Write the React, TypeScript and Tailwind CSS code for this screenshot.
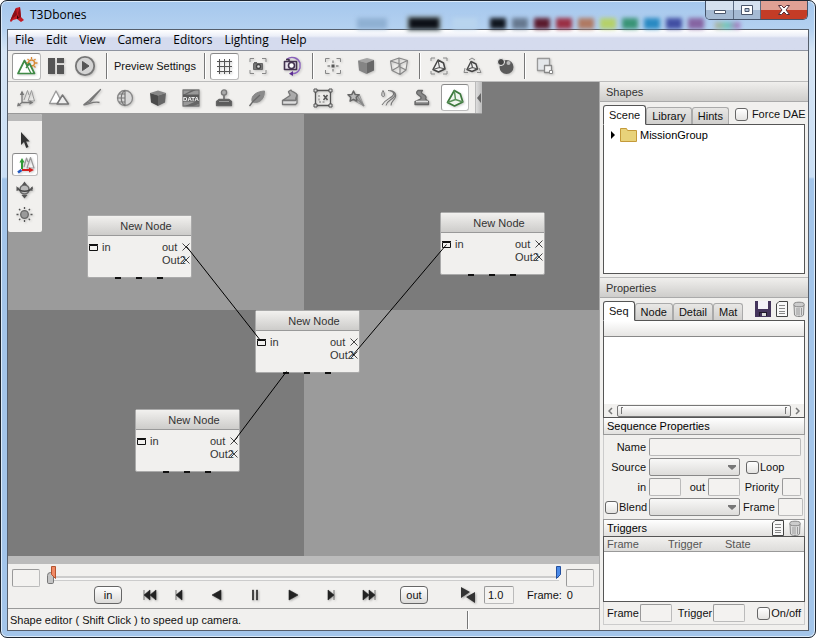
import React from 'react';

interface IconProps {
  children: React.ReactNode;
  className?: string;
}

const Icon: React.FC<IconProps> = ({ children, className = 'w-[22px] h-[22px]' }) => (
  <svg viewBox="0 0 22 22" className={`${className} shrink-0 drop-shadow-[1px_1px_1px_rgba(0,0,0,0.2)]`} fill="none" stroke="#666" strokeWidth="1.3" strokeLinejoin="round">
    {children}
  </svg>
);

const MountainSun = () => (
  <Icon>
    <g stroke="#d98a35">
      <circle cx="15.500" cy="8" r="3" />
      <path d="M15.500 2v2M15.500 12v3M10 8h2M19 8h2.500M11.500 4l1.200 1.200M19.500 4l-1.200 1.200M18 11l1.500 1.500" />
    </g>
    <path d="M2 18.500 8.500 5.500 11 10.500l2.500-2 5 10z" fill="#fff" stroke="#3f8a46" strokeWidth="1.700" />
    <path d="M11 10.500l4 8M10 13l3-4" stroke="#3f8a46" strokeWidth="1.300" />
  </Icon>
);

const Panels = () => (
  <Icon>
    <path d="M3 3h7v16H3zM12 3h7v5h-7zM12 10h7v9h-7z" fill="#555" stroke="none" />
  </Icon>
);

const PlayCircle = () => (
  <Icon>
    <circle cx="11" cy="11" r="9.200" fill="#d4d4d4" stroke="#777" strokeWidth="1.800" />
    <path d="M8.500 6.500v9l6.500-4.500z" fill="#555" stroke="#555" strokeWidth="1" />
  </Icon>
);

const GridIcon = () => (
  <Icon>
    <path d="M6.500 4v15M11.500 4v15M16.500 4v15M4 6.500h15M4 11.500h15M4 16.500h15" stroke="#555" strokeWidth="1" />
  </Icon>
);

const CameraFrame = () => (
  <Icon>
    <path d="M3 7V3.500h4M15 3.500h4V7M19 15v3.500h-4M7 18.500H3V15" stroke="#888" strokeWidth="1" />
    <path d="M6.500 8.500h9v6h-9zM7 7.500h3" fill="#777" stroke="#666" strokeWidth="1" />
    <circle cx="11.500" cy="11.500" r="2" fill="#ddd" stroke="#444" />
  </Icon>
);

const CameraOrbit = () => (
  <Icon>
    <path d="M6 4A8.500 8.500 0 0 1 19 8v5a8 8 0 0 1-8 5.500" stroke="#8a62bb" strokeWidth="1.400" />
    <path d="M12 16l-4 2.700 4 2.300z" fill="#5c2d91" stroke="none" />
    <path d="M3.500 6.500h12v8h-12zM5 4.500h3v2" fill="#e8e2ee" stroke="#43334f" strokeWidth="1.600" />
    <circle cx="10.500" cy="10.500" r="3" fill="#fff" stroke="#43334f" strokeWidth="1.600" />
  </Icon>
);

const TargetFrame = () => (
  <Icon>
    <path d="M3.500 7V3.500h4M14.500 3.500h4V7M18.500 15v3.500h-4M7.500 18.500h-4V15" stroke="#888" strokeWidth="1" />
    <path d="M11 5.500v2.500M11 14v2.500M5.500 11h2.500M14 11h2.500" stroke="#888" />
    <path d="M9.500 9.500h3v3h-3z" fill="#555" stroke="none" />
  </Icon>
);

const SolidCube = () => (
  <Icon>
    <path d="M3 5.500 12 3l7 2-7.500 3z" fill="#a5a5a5" stroke="none" />
    <path d="M3 5.500 11.500 8v11L4 15.500z" fill="#858585" stroke="none" />
    <path d="M11.500 8 19 5v10.500L11.500 19z" fill="#686868" stroke="none" />
  </Icon>
);

const WireCube = () => (
  <Icon>
    <path d="M2.500 6 11 3l8.500 2.500-7.500 3.500zM2.500 6 4 15.500l8 4 6-4.500 1.500-9.500M12 9v10.500M11 3v8.500L4 15.500M11 11.500l7 3.500" stroke="#888" strokeWidth="1.200" />
  </Icon>
);

const BoundsCube = () => (
  <Icon>
    <path d="M3 6V3h4M15 3h4v3M19 16v3h-4M7 19H3v-3" stroke="#888" strokeWidth="1" />
    <path d="M10 5 5 14.500l5.500 2.500 6.500-3-1.500-6z" fill="#eee" stroke="#444" strokeWidth="1.500" />
    <path d="M10 5l1.500 7.500L5 14.500M11.500 12.500 17 14" stroke="#555" strokeWidth="1.200" />
  </Icon>
);

const ObjectCube = () => (
  <Icon>
    <path d="M8 5l3-2 3 2M4 13l-1 4.500h4M18 13l2 4.500h-4" stroke="#888" strokeWidth="1" />
    <path d="M10 6.500 6 14.500l5 2 5.500-2.500-1.500-5z" fill="#eee" stroke="#444" strokeWidth="1.400" />
    <path d="M10 6.500l1.500 6L6 14.500M11.500 12.500l5 1.500" stroke="#555" strokeWidth="1.200" />
  </Icon>
);

const Spheres = () => (
  <Icon>
    <circle cx="12.500" cy="12" r="7" fill="#5b5b5b" stroke="none" />
    <circle cx="7" cy="7" r="3.500" fill="#444" stroke="#efefef" strokeWidth="1" />
    <circle cx="14.500" cy="8" r="2" fill="#bbb" stroke="none" />
  </Icon>
);

const Squares = () => (
  <Icon>
    <path d="M3.500 3.500h12v12h-12z" fill="#e4e7ea" stroke="#999" />
    <path d="M10.500 10.500h7v7h-7z" fill="#f4f4f4" stroke="#888" />
    <path d="M15.500 15.500h3v3h-3z" fill="#fff" stroke="#888" strokeWidth="1" />
  </Icon>
);

const AxisCones = () => (
  <Icon>
    <path d="M9 13 12.500 3.500 14 8M13 14l3.500-10.500L19.500 14z" stroke="#999" strokeWidth="1" />
    <path d="M7 16V5M7 15.500h9M7 15.500l-4 3" stroke="#777" />
    <path d="M4.800 8 7 3.500 9.200 8zM14.500 13.200l4 2.300-4 2.300zM2 19.500l1-4 3 3z" fill="#777" stroke="none" />
  </Icon>
);

const AxisConesColor = () => (
  <Icon>
    <path d="M10 13 12.500 4 14 8M13 14l3.500-10.500L20 14z" stroke="#999" strokeWidth="1.200" />
    <path d="M8 15V6" stroke="#2e9a34" strokeWidth="2" />
    <path d="M5.500 8.500 8 4l2.500 4.500z" fill="#2e9a34" stroke="none" />
    <path d="M8 16h8" stroke="#d3201f" strokeWidth="2" />
    <path d="M15 13.500l5 2.500-5 2.500z" fill="#d3201f" stroke="none" />
    <path d="M7.500 16 4 18.500" stroke="#2058c0" strokeWidth="2.600" />
  </Icon>
);

const Mountains = () => (
  <Icon>
    <path d="M1.500 16.500 8 4 14.500 16.500z" fill="#fff" stroke="#999" />
    <path d="M9 17 14.500 8l6 9z" fill="#eee" stroke="#777" strokeWidth="1.500" />
  </Icon>
);

const Brush = () => (
  <Icon>
    <path d="M19.500 2.500 8 13.500 3 17.500l6-2.500z" fill="#aaa" stroke="#777" strokeWidth="1.200" />
    <path d="M2.500 18c5-.5 10-4 16-2.500" stroke="#777" />
  </Icon>
);

const Globe = () => (
  <Icon>
    <circle cx="11" cy="11" r="7.500" fill="#d8d8d8" stroke="#888" />
    <path d="M11 3.500v15M3.500 11h8M5 7h6M5 15h6M11 3.500c-5 3-5 12 0 15" stroke="#777" strokeWidth="1.200" />
  </Icon>
);

const DarkCube = () => (
  <Icon>
    <path d="M3 6 11 3.500 19 6l-8 2.500z" fill="#888" stroke="none" />
    <path d="M3 6l8 2.500V19l-7-3.500z" fill="#4b4b4b" stroke="none" />
    <path d="M19 6l-8 2.500V19l7-3.500z" fill="#666" stroke="none" />
  </Icon>
);

const DataIcon = () => (
  <Icon>
    <path d="M3 3h16v16H3z" fill="#999" stroke="#777" />
    <path d="M3 8 12 3h4L5 8zM5 19 19 13v4l-6 2z" fill="#666" stroke="none" />
    <path d="M3 7.500h16v7H3z" fill="#5a5a5a" stroke="none" />
    <text x="11" y="13.500" textAnchor="middle" fontSize="6" fontWeight="bold" fill="#fff" stroke="none" fontFamily="Liberation Sans, Arial, sans-serif">DATA</text>
  </Icon>
);

const Joystick = () => (
  <Icon>
    <circle cx="11" cy="5.500" r="2.600" fill="#aaa" stroke="#777" />
    <path d="M11 8v5" stroke="#777" strokeWidth="1.800" />
    <path d="M6 12.500h10l2.500 2v4h-15v-4z" fill="#5c5c5c" stroke="#666" />
    <path d="M6 14.500h10" stroke="#999" strokeWidth="1" />
  </Icon>
);

const Leaf = () => (
  <Icon>
    <path d="M6 14C5 8 11 4.500 18.500 4c0 7-4 13-12 11z" fill="#8b8b8b" stroke="#888" strokeWidth="1" />
    <path d="M3.500 19 7 14.500 14 8" stroke="#6a6a6a" />
  </Icon>
);

const RoadShape = () => (
  <Icon>
    <path d="M3.500 13.500 11 8.500c.500-2-2-2.500-1.500-4L12 3c0 2 6 2.500 6 5l-1.500 5.500z" fill="#aaa" stroke="#777" />
    <path d="M3.500 13.500h13L18 8v8l-1.500 1.500h-13z" fill="#ddd" stroke="#777" />
  </Icon>
);

const ZoneSelect = () => (
  <Icon>
    <path d="M3.500 3.500h15v15h-15z" stroke="#555" />
    <path d="M2 2h3v3H2zM17 2h3v3h-3zM2 17h3v3H2zM17 17h3v3h-3z" fill="#ddd" stroke="#555" strokeWidth="1" />
    <path d="M11.500 8l4 5M15.500 8l-4 5" stroke="#555" strokeWidth="1.500" />
    <path d="M7 8v7h7" strokeDasharray="2 1.500" stroke="#777" strokeWidth="1" />
  </Icon>
);

const ShootingStar = () => (
  <Icon>
    <path d="M8 13 19 19 14 7z" fill="#bbb" stroke="#999" strokeWidth="1" />
    <path d="M10 10l9 9M12 8.500l7 10.500" stroke="#888" />
    <path d="M8.500 4l1.600 3.400 3.900.4-2.800 2.600.7 3.700-3.400-1.800-3.400 1.800.7-3.700L3 7.800l3.900-.4z" fill="#bbb" stroke="#666" strokeWidth="1.500" />
  </Icon>
);

const River = () => (
  <Icon>
    <path d="M5 3.500C3.500 6 3 9 5 9.500S7 7 5 3.500z" fill="#ccc" stroke="#777" strokeWidth="1" />
    <path d="M10 3.500c6 .5 7 3.500 4 6S8 12 4 18M12 3.500c6 1 6 5 3 7.500s-6 3-7 7.500M14 4c5 2 4 6 2.500 8s-3.500 3-3.500 6.500" stroke="#777" strokeWidth="1.100" />
  </Icon>
);

const RoadPath = () => (
  <Icon>
    <path d="M7 3.500h4.500c-2 2-1 3 1 4s3.500 3 2 4.500l3 2.500v3H4v-3L9.500 12C11 10.500 9.500 9.500 8 8.500 5 7 5 5 7 3.500z" fill="#888" stroke="#666" />
    <path d="M5 14.500h12" stroke="#ddd" strokeWidth="1.500" />
  </Icon>
);

const ShapeCube = () => (
  <Icon>
    <path d="M10.300 3.500 3.500 15.500l7 3.500 8.300-4L16.300 7z" fill="#f1f6ef" stroke="#3c783c" strokeWidth="1.700" />
    <path d="M10.300 3.500 11.500 12.500 3.500 15.500M11.500 12.500l7.300 2.500" stroke="#5a925a" strokeWidth="1.500" />
  </Icon>
);

const PointerArrow = () => (
  <Icon>
    <path d="M7 3v13l3-3 2.200 6 2.300-1-2.300-5.500h3.500z" fill="#333" stroke="none" />
  </Icon>
);

const RotateGizmo = () => (
  <Icon>
    <circle cx="10.500" cy="10.500" r="4.500" fill="#bbb" stroke="#666" strokeWidth="1.500" />
    <path d="M3.500 8.500c2 5 12 5 15 0" stroke="#444" strokeWidth="1.500" />
    <path d="M8 6l2.500-3.500L13 6zM7.500 16l3 3.500 3-3.500zM2.500 7l3 4-3 1zM18.500 7l-3 4 3 1z" fill="#555" stroke="none" />
  </Icon>
);

const SunIcon = () => (
  <Icon>
    <circle cx="10.500" cy="10.500" r="3.800" fill="#9a9a9a" stroke="#666" />
    <path d="M10.500 3v2M10.500 16v2M2.500 10.500h2M16.500 10.500h2M5 5l1.300 1.300M14.700 14.700 16 16M16 5l-1.300 1.300M6.300 14.700 5 16" stroke="#555" />
  </Icon>
);

const SaveIcon = () => (
  <svg viewBox="0 0 16 16" className="w-4 h-4">
    <path d="M0 0h16v16H0z" fill="#45355c" />
    <path d="M3 0h10v8H3z" fill="#f4f2f7" />
    <path d="M4 11h8v4H4z" fill="#201828" />
    <path d="M5 12h6v3H5z" fill="#ddd" />
    <path d="M5 12h2v3H5z" fill="#45355c" />
  </svg>
);

const PageIcon = () => (
  <svg viewBox="0 0 12 16" className="w-3 h-4" fill="none">
    <path d="M3 .500h8.500v15H.500V3z" fill="#f8f8f8" stroke="#444" />
    <path d="M3 4.500h6M3 7.500h6M3 10.500h6M3 12.500h6" stroke="#888" />
  </svg>
);

const TrashIcon = () => (
  <svg viewBox="0 0 12 16" className="w-3 h-4" fill="none">
    <path d="M1 4l.5 10c1 2 8 2 9 0L11 4z" fill="#ddd" stroke="#888" />
    <ellipse cx="6" cy="3.500" rx="5.300" ry="2.300" fill="#ccc" stroke="#888" />
    <path d="M4 7v7M6 7v7.500M8.500 7v7" stroke="#999" />
  </svg>
);

interface ToolProps {
  label: string;
  icon: React.ReactNode;
  active?: boolean;
  size?: string;
}

const Tool: React.FC<ToolProps> = ({ label, icon, active, size = 'w-[29px] h-[27px]' }) => (
  <button
    type="button"
    aria-label={label}
    aria-pressed={active}
    className={`${size} shrink-0 flex items-center justify-center rounded-[3px] border ${active ? 'bg-white border-[#bbb] border-t-[#888] border-l-[#999]' : 'border-transparent'}`}
  >
    {icon}
  </button>
);

const Separator = ({ className = 'mx-1', height = 'h-[26px]' }: { className?: string; height?: string }) => (
  <div className={`w-[2px] shrink-0 border-l border-[#777] bg-white ${height} ${className}`} />
);

const swatches = ['bg-[#10161f]', 'bg-[#66788f]', 'bg-[#5b1a2e]', 'bg-[#9b3045]', 'bg-[#b07a63]', 'bg-[#b5d16a]', 'bg-[#3a9476]', 'bg-[#2a8ac2]', 'bg-[#424fa3]', 'bg-[#8664a2]'];

const TitleBar = () => (
  <header className="relative h-7 flex items-start justify-between pl-2 pr-[7px]">
    {/* blurred desktop showing through the glass */}
    <div className="absolute left-[350px] right-[72px] bottom-0 h-[11px] flex items-stretch blur-[2px]">
      <div className="w-[30px] ml-[6px] bg-[#8fb0d3]" />
      <div className="w-[30px] ml-[22px] bg-[#0c1017] ring-2 ring-[#8fa0a5]" />
      <div className="w-[24px] ml-[14px] bg-[#b8d4ee]" />
      <div className="flex ml-[13px] gap-[6px]">
        {swatches.map((color) => <div key={color} className={`w-4 ${color}`} />)}
      </div>
      <div className="w-[25px] h-[7px] self-end ml-[11px] bg-linear-to-r from-[#b0ad98] via-[#69c9bd] to-[#a76bbd]" />
    </div>
    <div className="relative flex items-center gap-[5px] pt-[5px]">
      <svg viewBox="0 0 16 18" className="w-4 h-[18px]">
        <path d="M1 15 4 8l3-6 4-1 1 10 3 3-3 2-4-3-4 1-2 2z" fill="#c31b25" />
        <path d="M7 2l1 7-4 3-3 3 3-7zM9 7l2-6 1 10-2 1z" fill="#8a1018" />
        <path d="M8 9l2 3-2 1z" fill="#3a0608" />
      </svg>
      <h1 className="text-[12px] leading-[18px] font-['Open_Sans','Segoe_UI',sans-serif] text-black">T3Dbones</h1>
    </div>
    <div className="relative flex h-[19px] rounded-b-[5px] border border-t-0 border-[#445268] overflow-hidden">
      <button type="button" aria-label="Minimize" className="w-7 flex items-center justify-center border-r border-[#5b6b82] bg-linear-to-b from-[#d5e1ef] from-50% to-[#a5bad3] to-50%">
        <svg viewBox="0 0 14 12" className="w-[14px] h-3"><path d="M1.500 6.500h11v3h-11z" fill="#fff" stroke="#4a566b" /></svg>
      </button>
      <button type="button" aria-label="Maximize" className="w-[27px] flex items-center justify-center border-r border-[#5b6b82] bg-linear-to-b from-[#d5e1ef] from-50% to-[#a5bad3] to-50%">
        <svg viewBox="0 0 14 12" className="w-[14px] h-3"><path d="M1.500 1.500h11v9h-11z" fill="#fff" stroke="#4a566b" /><path d="M5 4.500h4v3H5z" fill="#b4c4d9" stroke="#4a566b" /></svg>
      </button>
      <button type="button" aria-label="Close" className="w-[46px] flex items-center justify-center bg-linear-to-b from-[#e0a094] from-50% to-[#c43c26] to-50%">
        <svg viewBox="0 0 14 12" className="w-[14px] h-3"><path d="M1.500 1.500h3L7 4l2.500-2.500h3L9 6l3.500 4.500h-3L7 8l-2.500 2.500h-3L5 6z" fill="#fff" stroke="#54303a" /></svg>
      </button>
    </div>
  </header>
);

const menus = ['File', 'Edit', 'View', 'Camera', 'Editors', 'Lighting', 'Help'];

const MenuBar = () => (
  <nav className="h-[21px] px-[7px] flex items-center gap-3 border-b border-[#8e939f] bg-linear-to-b from-white from-0% via-[#eceff8] via-30% to-[#d5dbee] to-40% font-['Open_Sans','Segoe_UI',sans-serif] text-[12px] leading-4 text-black">
    {menus.map((menu) => <button key={menu} type="button">{menu}</button>)}
  </nav>
);

const MainToolbar = () => (
  <div className="h-[31px] shrink-0 flex items-center pl-1 border-b border-[#bbb] bg-[#f1f0ee]">
    <Tool label="World editor" icon={<MountainSun />} active />
    <Tool label="GUI editor" icon={<Panels />} />
    <Tool label="Play" icon={<PlayCircle />} />
    <Separator className="ml-[7px] mr-[6px]" />
    <button type="button" className="whitespace-nowrap">Preview Settings</button>
    <Separator className="ml-2 mr-1" />
    <div className="flex gap-[5px]">
      <Tool label="Grid" icon={<GridIcon />} active />
      <Tool label="Fit camera" icon={<CameraFrame />} />
      <Tool label="Orbit camera" icon={<CameraOrbit />} />
    </div>
    <Separator className="ml-[5px] mr-[5px]" />
    <div className="flex gap-1">
      <Tool label="Center" icon={<TargetFrame />} />
      <Tool label="Solid" icon={<SolidCube />} />
      <Tool label="Wireframe" icon={<WireCube />} />
    </div>
    <Separator className="ml-[5px] mr-1" />
    <div className="flex gap-1">
      <Tool label="Bounds" icon={<BoundsCube />} />
      <Tool label="Object transform" icon={<ObjectCube />} />
      <Tool label="Materials" icon={<Spheres />} />
    </div>
    <Separator className="ml-1 mr-[5px]" />
    <Tool label="Background" icon={<Squares />} />
  </div>
);

const editors = [
  { label: 'Object editor', icon: <AxisCones /> },
  { label: 'Terrain editor', icon: <Mountains /> },
  { label: 'Terrain painter', icon: <Brush /> },
  { label: 'Material editor', icon: <Globe /> },
  { label: 'Sketch tool', icon: <DarkCube /> },
  { label: 'Datablock editor', icon: <DataIcon /> },
  { label: 'Decal editor', icon: <Joystick /> },
  { label: 'Forest editor', icon: <Leaf /> },
  { label: 'Mesh road editor', icon: <RoadShape /> },
  { label: 'Mission area editor', icon: <ZoneSelect /> },
  { label: 'Particle editor', icon: <ShootingStar /> },
  { label: 'River editor', icon: <River /> },
  { label: 'Road editor', icon: <RoadPath /> },
  { label: 'Shape editor', icon: <ShapeCube />, active: true },
];

const EditorToolbar = () => (
  <div className="w-fit h-8 flex items-center pl-1 border-b border-[#999] bg-[#f1f0ee]">
    <div className="flex gap-[5px]">
      {editors.map((editor) => <Tool key={editor.label} {...editor} size="w-[28px] h-[27px]" />)}
    </div>
    <button type="button" aria-label="Collapse toolbar" className="w-[7px] self-stretch ml-[6px] flex items-center justify-center border-l border-[#bbb] bg-linear-to-r from-[#ddd] to-[#bbb]">
      <svg viewBox="0 0 4 10" className="w-1 h-[10px]"><path d="M4 0v10L0 5z" fill="#666" /></svg>
    </button>
  </div>
);

const Palette = () => (
  <div className="w-[34px] rounded-[2px] overflow-hidden bg-[#f1f0ee]">
    <div className="h-[7px] bg-[#b9b9b9]" />
    <div className="flex flex-col items-center gap-[2px] pt-[7px] pb-[6px]">
      <Tool label="Select" icon={<PointerArrow />} size="w-[26px] h-[23px]" />
      <Tool label="Move" icon={<AxisConesColor />} size="w-[26px] h-[23px]" active />
      <Tool label="Rotate" icon={<RotateGizmo />} size="w-[26px] h-[23px]" />
      <Tool label="Light" icon={<SunIcon />} size="w-[26px] h-[23px]" />
    </div>
  </div>
);

const nodes = [
  { id: 'a', x: 79, y: 133 },
  { id: 'b', x: 432, y: 130 },
  { id: 'c', x: 247, y: 228 },
  { id: 'd', x: 127, y: 327 },
];

const links = ['M178.500 164.500 252.500 258.500', 'M344.500 273.500 438.500 162.500', 'M226.500 358.500 278.500 289.500'];

const Cross = () => (
  <svg viewBox="0 0 8 8" className="w-2 h-2 mb-[2px] shrink-0"><path d="M.500.500l7 7M7.500.500l-7 7" stroke="#444" /></svg>
);

const GraphNode = () => (
  <div className="w-[105px] h-[63px] rounded-[2px] border border-[#aaa] bg-[#f1f0ee] text-[#333]">
    <div className="h-5 pl-[13px] flex items-center justify-center border-b border-[#999] bg-linear-to-b from-[#f2f1ef] to-[#cdccca]">New Node</div>
    <div className="flex justify-between pt-1 pl-px pr-[1px] leading-[13px]">
      <div className="flex h-[15px] items-center gap-1">
        <svg viewBox="0 0 9 7" className="w-[9px] h-[7px] mb-px"><path d="M.500 1.500h8v5h-8zM0 .500h9" fill="none" stroke="#111" /></svg>
        in
      </div>
      <div className="w-[28px] pt-px">
        <div className="flex items-center justify-between">out<Cross /></div>
        <div className="flex items-center">Out2<span className="-ml-1"><Cross /></span></div>
      </div>
    </div>
    <div className="flex pt-[10px] pl-[27px] gap-[15px]">
      <i className="w-[6px] h-[2px] bg-[#111]" />
      <i className="w-[6px] h-[2px] bg-[#111]" />
      <i className="w-[6px] h-[2px] bg-[#111]" />
    </div>
  </div>
);

const Viewport = () => (
  <div className="relative flex-1 min-h-0 overflow-hidden">
    <div className="absolute inset-0 grid grid-cols-2 grid-rows-[12fr_13fr]">
      <div className="bg-[#9b9b9b]" />
      <div className="bg-[#7b7b7b]" />
      <div className="bg-[#7b7b7b]" />
      <div className="bg-[#9b9b9b]" />
    </div>
    <div className="relative">
      <EditorToolbar />
      <Palette />
    </div>
    {nodes.map((node) => (
      <div key={node.id} className="absolute" style={{ left: node.x, top: node.y }}>
        <GraphNode />
      </div>
    ))}
    <svg className="absolute inset-0 w-full h-full pointer-events-none">
      {links.map((d) => <path key={d} d={d} stroke="#000" fill="none" />)}
    </svg>
  </div>
);

const field = 'min-w-0 rounded-[2px] border border-[#bbb] border-t-[#999] border-l-[#999] bg-[#f3f2f0] px-[3px]';

const transport = [
  { label: 'Previous frame', d: 'M4 1v10M10 1v10L4 6z' },
  { label: 'Play backwards', d: 'M11 1v10L2 6z' },
  { label: 'Pause', d: 'M4.500 1v10h1V1zM8.500 1v10h1V1z' },
  { label: 'Play forwards', d: 'M3 1v10l9-5z' },
  { label: 'Next frame', d: 'M10 1v10M4 1v10l6-5z' },
  { label: 'Last frame', d: 'M13 1v10M1 1v10l6-5zM7 1v10l6-5z' },
];

const TransportButton = ({ label, d }: { label: string; d: string }) => (
  <button type="button" aria-label={label}>
    <svg viewBox="0 0 14 12" className="w-[14px] h-3 drop-shadow-[1px_1px_1px_rgba(0,0,0,0.3)]"><path d={d} fill="#222" stroke="#222" strokeWidth=".6" /></svg>
  </button>
);

const pill = 'w-[28px] h-[18px] rounded-[4px] border border-[#666] bg-linear-to-b from-white to-[#dcdbd9] text-center';

const Timeline = () => (
  <section className="shrink-0 bg-[#f1f0ee]">
    <div className="h-2 bg-[#bbb]" />
    <div className="flex items-start gap-[7px] pt-[5px] pl-1 pr-[5px]">
      <input aria-label="Start frame" className={`${field} w-[28px] h-[18px]`} />
      <div className="relative flex-1 h-4">
        <input
          type="range"
          aria-label="Timeline"
          defaultValue={0}
          className="block w-full h-[19px] appearance-none bg-transparent [&::-webkit-slider-runnable-track]:h-[5px] [&::-webkit-slider-runnable-track]:bg-[#f6f6f6] [&::-webkit-slider-runnable-track]:border-t-2 [&::-webkit-slider-runnable-track]:border-b [&::-webkit-slider-runnable-track]:border-[#ccc] [&::-webkit-slider-thumb]:appearance-none [&::-webkit-slider-thumb]:w-[7px] [&::-webkit-slider-thumb]:h-3 [&::-webkit-slider-thumb]:-mt-[6px] [&::-webkit-slider-thumb]:rounded-t-[4px] [&::-webkit-slider-thumb]:rounded-b-[2px] [&::-webkit-slider-thumb]:border [&::-webkit-slider-thumb]:border-[#777] [&::-webkit-slider-thumb]:bg-[#c5c5c5]"
        />
        <svg viewBox="0 0 5 13" className="absolute left-1 -top-[3px] w-[5px] h-[13px]"><path d="M.500.500h4v12l-4-4z" fill="#f08a66" stroke="#b5532f" /></svg>
        <svg viewBox="0 0 5 13" className="absolute -right-[2px] -top-[3px] w-[5px] h-[13px]"><path d="M.500.500h4v8l-4 4z" fill="#4a8ae8" stroke="#234f9e" /></svg>
      </div>
      <input aria-label="End frame" className={`${field} w-[28px] h-[18px]`} />
    </div>
    <div className="flex items-center h-[21px] pl-[86px] pb-[5px]">
      <button type="button" className={pill}>in</button>
      <div className="flex ml-[21px] mr-[15px]">
        <TransportButton label="First frame" d="M1 1v10M7 1v10L1 6zM13 1v10L7 6z" />
      </div>
      <div className="flex gap-6 mr-6">
        {transport.map((item) => <TransportButton key={item.label} {...item} />)}
      </div>
      <button type="button" className={pill}>out</button>
      <svg viewBox="0 0 16 16" className="w-4 h-4 ml-8 drop-shadow-[1px_1px_1px_rgba(0,0,0,0.3)]"><path d="M1 0v11l9-6zM15 5v11L6 10z" fill="#333" /></svg>
      <input aria-label="Speed" defaultValue="1.0" className={`${field} w-[30px] h-[18px] ml-2`} />
      <span className="ml-[13px]">Frame:</span>
      <output className="ml-[5px]">0</output>
    </div>
  </section>
);

const StatusBar = () => (
  <footer className="h-[22px] shrink-0 flex items-center pl-[2px] border-t border-[#999] bg-[#f1f0ee]">
    <span className="w-[453px]">Shape editor ( Shift Click ) to speed up camera.</span>
    <Separator height="h-[18px]" />
  </footer>
);

const PanelTitle = ({ children }: { children: React.ReactNode }) => (
  <h2 className="h-5 shrink-0 pl-[6px] flex items-center border-b border-[#aaa] bg-linear-to-b from-[#f0efed] to-[#cecdcb] text-[#333]">{children}</h2>
);

const Tab = ({ children, active }: { children: React.ReactNode; active?: boolean }) => (
  <button
    type="button"
    role="tab"
    aria-selected={!!active}
    className={`rounded-t-[3px] border ${active ? 'px-[5px] h-5 -mb-px pb-px bg-white border-[#555] border-b-white relative' : 'px-[5px] h-[17px] bg-linear-to-b from-[#e8e7e5] to-[#d0cfcd] border-[#aaa] border-b-0'}`}
  >
    {children}
  </button>
);

const Check = ({ label, gap = 'gap-px' }: { label: string; gap?: string }) => (
  <label className={`flex items-center whitespace-nowrap ${gap}`}>
    <input type="checkbox" className="appearance-none w-[13px] h-[13px] shrink-0 rounded-[3px] border border-[#666] bg-linear-to-b from-white to-[#e4e3e1]" />
    {label}
  </label>
);

const Drop = ({ id, label }: { id: string; label?: string }) => (
  <div className="relative w-[91px] shrink-0">
    <select id={id} aria-label={label} className="block appearance-none w-full h-[18px] rounded-[2px] border border-[#888] bg-linear-to-b from-[#f8f8f7] to-[#dddcda]" />
    <svg viewBox="0 0 8 5" className="absolute right-1 top-[7px] w-2 h-[5px] pointer-events-none"><path d="M0 0h8v1.500L4 5 0 1.500z" fill="#777" /></svg>
  </div>
);

const formLabel = 'shrink-0 text-right';
const strip = 'flex items-center px-[3px] bg-linear-to-b from-white to-[#e2e1df]';

const Sidebar = () => (
  <aside className="w-[209px] shrink-0 flex flex-col border-l border-[#aaa] bg-[#f1f0ee] text-[#111]">
    <PanelTitle>Shapes</PanelTitle>
    <div className="px-[3px] pt-[2px]">
      <div role="tablist" className="flex items-end h-5">
        <Tab active>Scene</Tab>
        <Tab>Library</Tab>
        <Tab>Hints</Tab>
        <div className="self-start ml-[6px] pt-[3px]"><Check label="Force DAE" gap="gap-1" /></div>
      </div>
      <div className="h-[150px] border border-[#555] bg-white pt-[3px] pl-[7px]">
        <div className="flex items-center text-black">
          <svg viewBox="0 0 4 8" className="w-1 h-2"><path d="M0 0v8l4-4z" fill="#000" /></svg>
          <svg viewBox="0 0 17 14" className="w-[17px] h-[14px] ml-[5px] mr-[3px]"><path d="M.500.500h6l1 2h9v11H.500z" fill="#e8d27a" stroke="#c49a3a" /></svg>
          MissionGroup
        </div>
      </div>
    </div>
    <div className="h-1 border-b border-[#bbb]" />
    <PanelTitle>Properties</PanelTitle>
    <div className="flex-1 min-h-0 flex flex-col px-[3px] pt-[2px]">
      <div role="tablist" className="flex items-end h-5">
        <Tab active>Seq</Tab>
        <Tab>Node</Tab>
        <Tab>Detail</Tab>
        <Tab>Mat</Tab>
        <div className="flex items-center gap-[5px] ml-auto pb-[3px]">
          <button type="button" aria-label="Save"><SaveIcon /></button>
          <button type="button" aria-label="New sequence"><PageIcon /></button>
          <button type="button" aria-label="Delete sequence"><TrashIcon /></button>
        </div>
      </div>
      <div className="border border-[#555] bg-white">
        <div className="h-4 border-b border-[#888] bg-linear-to-b from-white to-[#e6e5e3]" />
        <div className="h-[67px]" />
        <div className="flex items-center justify-between h-[13px] px-1 bg-[#f1f0ee]">
          <svg viewBox="0 0 5 8" className="w-[5px] h-2" fill="none" stroke="#777" strokeWidth="1.500"><path d="M4 1 1 4l3 3" /></svg>
          <div className="flex-1 mx-1 h-3 px-[3px] flex items-center justify-between rounded-[2px] border border-[#777] bg-linear-to-b from-white to-[#dcdbd9]">
            <i className="w-[2px] h-[7px] border-l border-t border-[#777]" />
            <i className="w-[2px] h-[7px] border-l border-t border-[#777]" />
          </div>
          <svg viewBox="0 0 5 8" className="w-[5px] h-2" fill="none" stroke="#777" strokeWidth="1.500"><path d="M1 1l3 3-3 3" /></svg>
        </div>
      </div>
      <h3 className={`${strip} h-[17px] border-x border-b border-[#999] text-black`}>Sequence Properties</h3>
      <div className="flex flex-col gap-[2px] pl-px pr-[3px] py-[3px] border-x border-[#ccc]">
        <div className="flex items-center gap-[3px]">
          <label htmlFor="name" className={`${formLabel} w-[41px]`}>Name</label>
          <input id="name" className={`${field} flex-1 h-[18px]`} />
        </div>
        <div className="flex items-center gap-[3px]">
          <label htmlFor="source" className={`${formLabel} w-[41px]`}>Source</label>
          <Drop id="source" />
          <div className="ml-[3px]"><Check label="Loop" /></div>
        </div>
        <div className="flex items-center gap-[3px]">
          <label htmlFor="in" className={`${formLabel} w-[41px]`}>in</label>
          <input id="in" className={`${field} w-8 h-[18px] shrink-0`} />
          <label htmlFor="out" className={`${formLabel} w-[21px]`}>out</label>
          <input id="out" className={`${field} w-8 h-[18px] shrink-0`} />
          <label htmlFor="priority" className={`${formLabel} flex-1`}>Priority</label>
          <input id="priority" className={`${field} w-[19px] h-[18px] shrink-0`} />
        </div>
        <div className="flex items-center gap-[3px]">
          <div className="w-[41px] shrink-0"><Check label="Blend" /></div>
          <Drop id="blend" label="Blend sequence" />
          <label htmlFor="blend-frame" className={`${formLabel} flex-1`}>Frame</label>
          <input id="blend-frame" className={`${field} w-[25px] h-[18px] shrink-0`} />
        </div>
      </div>
      <div className={`${strip} h-[17px] border-x border-t border-[#999] text-black`}>
        <h3 className="flex-1">Triggers</h3>
        <div className="flex gap-[5px]">
          <button type="button" aria-label="New trigger"><PageIcon /></button>
          <button type="button" aria-label="Delete trigger"><TrashIcon /></button>
        </div>
      </div>
      <div className="flex-1 border border-[#555] bg-white">
        <table className="w-full table-fixed">
          <thead className="bg-linear-to-b from-[#f2f1ef] to-[#dcdbd9] text-[#555]">
            <tr className="border-b border-[#999] text-left leading-[14px]">
              <th scope="col" className="w-[60px] pl-[3px] font-normal">Frame</th>
              <th scope="col" className="w-[58px] pl-1 font-normal">Trigger</th>
              <th scope="col" className="pl-[3px] font-normal">State</th>
            </tr>
          </thead>
          <tbody />
        </table>
      </div>
      <div className="flex items-center mb-[5px] py-[2px] px-[3px] border-x border-b border-[#ccc]">
        <label htmlFor="trigger-frame">Frame</label>
        <input id="trigger-frame" className={`${field} w-8 h-[18px] ml-px mr-[6px] shrink-0`} />
        <label htmlFor="trigger">Trigger</label>
        <input id="trigger" className={`${field} w-8 h-[18px] ml-px mr-auto shrink-0`} />
        <Check label="On/off" />
      </div>
    </div>
  </aside>
);

export default function App() {
  return (
    <div className="h-screen pr-[3px] bg-white font-['Liberation_Sans',Arial,sans-serif] text-[11px] leading-[14px] text-[#111]">
      <div className="h-full flex flex-col rounded-[7px] border border-[#1d2530] shadow-[inset_0_0_0_1px_#dcebfa] overflow-hidden bg-[linear-gradient(to_bottom,#a5c7ed_0px,#b4d1f0_28px,#d5e4f4_50px,#cadff5_176px,#a3c5ea_178px)]">
        <TitleBar />
        <div className="flex-1 min-h-0 mx-[6px] mb-[6px] flex flex-col border border-[#555e6b] bg-[#f1f0ee]">
          <MenuBar />
          <MainToolbar />
          <div className="flex-1 min-h-0 flex">
            <main className="flex-1 min-w-0 flex flex-col">
              <Viewport />
              <Timeline />
              <StatusBar />
            </main>
            <Sidebar />
          </div>
        </div>
      </div>
    </div>
  );
}
